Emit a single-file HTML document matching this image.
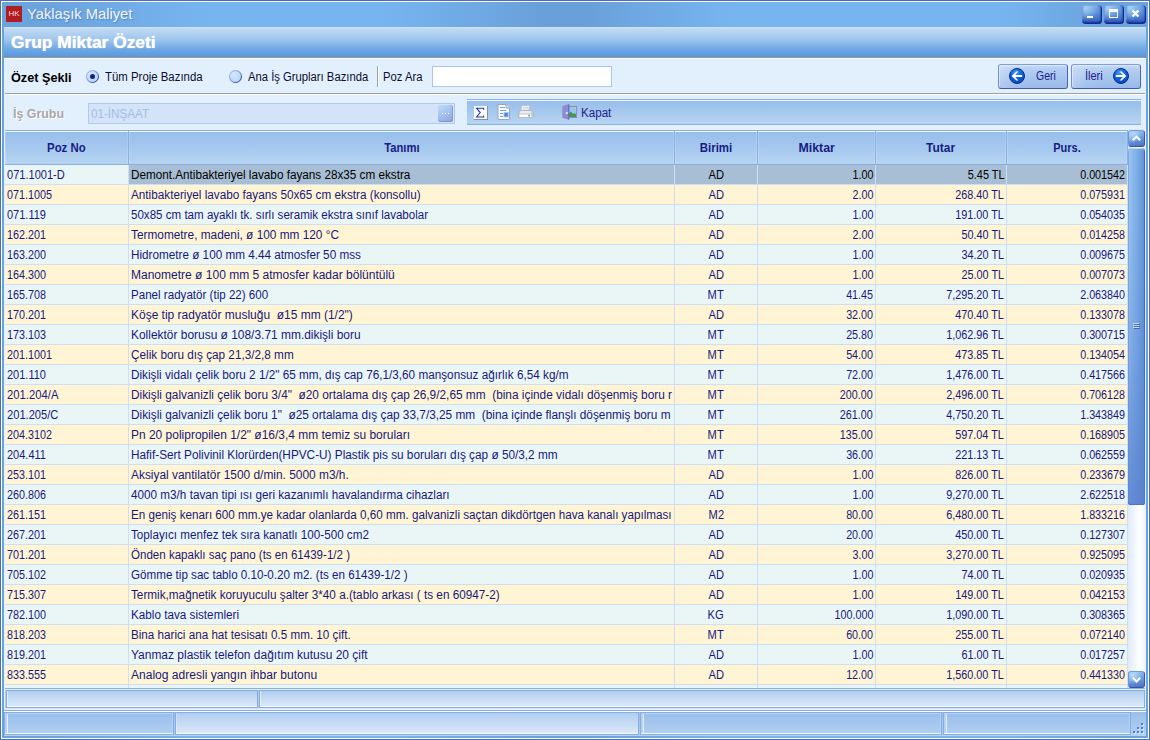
<!DOCTYPE html>
<html><head><meta charset="utf-8"><title>Yaklaşık Maliyet</title>
<style>
*{box-sizing:border-box;margin:0;padding:0}
html,body{width:1150px;height:740px;overflow:hidden;background:#6ba3dd}
body{position:relative;font-family:"Liberation Sans",sans-serif;font-size:12px;color:#18187e}
.abs{position:absolute}
/* window frame */
#frame{position:absolute;left:0;top:0;width:1150px;height:740px;background:#4970b7}
#frameW{position:absolute;left:1px;top:1px;width:1148px;height:738px;background:#fff}
#frameB{position:absolute;left:2px;top:2px;width:1146px;height:736px;
  background:linear-gradient(90deg,#6ba3dd 0%,#6ba3dd 4%,#77b5f1 18%,#77b5f1 33%,#6aa0da 47%,#6aa0da 51%,#77b5f1 64%,#77b5f1 87%,#6ba3dd 96%,#6ba3dd 100%)}
#botBlue{position:absolute;left:4px;top:735px;width:1142px;height:1px;background:#b4d2f2}
#icon{position:absolute;left:6px;top:6px;width:16px;height:16px;background:#b11c22;color:#fff;font-size:8px;line-height:16px;text-align:center;letter-spacing:-.1px;color:#f7dede}
#title{position:absolute;left:27px;top:3px;height:22px;line-height:22px;color:#f3f7fd;text-shadow:1px 1px 1px rgba(60,100,170,.55)}
.wb{position:absolute;top:5px;width:20px;height:19px;border-radius:3.5px;
  background:radial-gradient(circle at 20% 15%,rgba(185,226,248,.75) 0%,rgba(185,226,248,0) 55%),linear-gradient(180deg,#6fa5e3 0%,#5b91db 40%,#406dc7 78%,#2c50b3 100%);
  box-shadow:inset -1px -1px 1px #14288f,inset 0 -2px 2px rgba(20,40,143,.75),inset -2px 0 2px rgba(30,60,170,.5),inset 1px 1px 0 rgba(150,195,240,.6)}
/* client */
#client{position:absolute;left:4px;top:27px;width:1142px;height:684px;background:#e2effd}
#hdr{position:absolute;left:4px;top:27px;width:1142px;height:30px;background:linear-gradient(180deg,#d0e2f6 0,#d0e2f6 1px,#c4dbf3 1px,#9cc5ee 43%,#74aae4 70%,#5698e0 100%)}
#hdrline{position:absolute;left:4px;top:57px;width:1142px;height:2px;background:linear-gradient(180deg,#9b9896 0,#9b9896 1px,#fff 1px)}
#hdrtxt{position:absolute;left:11px;top:31.6px;height:20px;line-height:20px;color:#fff;text-shadow:0 0 1px #fff}
.sepH{position:absolute;left:5px;top:93px;width:1140px;height:2px;background:linear-gradient(180deg,#9f9f9f 0,#9f9f9f 1px,#fff 1px)}
.sepV{position:absolute;left:377px;top:66px;width:2px;height:21px;background:linear-gradient(90deg,#a0a0a0 0,#a0a0a0 1px,#fff 1px)}
.lbl{position:absolute;height:20px;line-height:20px;white-space:pre}
.radio{position:absolute;width:13px;height:13px;border-radius:50%;background:linear-gradient(135deg,#a3c9f2 0%,#7ea4e0 40%,#3a4ea8 75%,#1d2b8c 100%)}
.radio:before{content:"";position:absolute;left:1px;top:1px;width:11px;height:11px;border-radius:50%;background:radial-gradient(circle at 40% 35%,#d9e9fb 0%,#c0daf7 55%,#aecdf2 100%)}
.radio.on:after{content:"";position:absolute;left:4px;top:4px;width:5px;height:5px;border-radius:50%;background:#141e86}
#search{position:absolute;left:432px;top:66px;width:180px;height:21px;background:#fff;border:1px solid #a9c6ee}
.btn{position:absolute;top:64px;width:70px;height:25px;border:1px solid;border-color:#7f9ddb #4f63b4 #4459ad #7191d5;border-radius:3px;
  background:linear-gradient(100deg,rgba(255,255,255,.28) 0%,rgba(255,255,255,.08) 25%,rgba(255,255,255,0) 50%),linear-gradient(180deg,#c6daf5 0%,#b4cef1 20%,#a5c4ed 60%,#98bae9 100%);box-shadow:inset 1px 1px 0 rgba(255,255,255,.4)}
/* combobox */
#combo{position:absolute;left:88px;top:103px;width:367px;height:21px;background:#d4e3f7;border:1px solid #aecbef}
#ell{position:absolute;left:438px;top:105px;width:15px;height:17px;border-radius:3px;background:linear-gradient(150deg,#c0dcf6 0%,#aacaf0 35%,#9db9e8 65%,#8d9fd8 100%);box-shadow:inset 0 -1px 0 #8491cf,inset -1px 0 0 #8c9ad6}
#ell i{position:absolute;top:8px;width:1.2px;height:1.2px;background:#fff}
/* toolbar */
#tb{position:absolute;left:467px;top:99px;width:674px;height:26px;
  background:linear-gradient(180deg,#8aafe4 0,#8aafe4 1px,#ecf4fd 1px,#ecf4fd 2px,#97beea 2px,#b8d4f2 25px,#8aafe4 25px)}
/* grid */
#gridB{position:absolute;left:4px;top:130px;width:1142px;height:559px;background:#e2effd}
#ghead{position:absolute;left:5px;top:130px;width:1123px;height:35px;background:#8aafe4}
.h{position:absolute;top:131px;height:33px;line-height:34px;text-align:center;font-weight:bold;color:#181c82;
  background:linear-gradient(180deg,#f0f7fe 0,#f0f7fe 1px,#97beeb 1px,#a5c8ee 50%,#b6d4f2 100%);box-shadow:inset 1px 0 0 rgba(255,255,255,.16),inset -1px 0 0 rgba(255,255,255,.14)}
.r{position:absolute;left:0;width:1128px;height:20px}
.c{position:absolute;top:0;height:19px;line-height:21px;overflow:hidden;white-space:pre}
#gbody{position:absolute;left:5px;top:165px;width:1123px;height:523px;background:#cddef5}
#gbot{position:absolute;left:5px;top:688px;width:1140px;height:1px;background:#8aafe4}
/* scrollbar */
#sb{position:absolute;left:1128px;top:130px;width:17px;height:558px;background:linear-gradient(90deg,#dfebfa 0%,#f4f8fe 45%,#ffffff 70%,#eef4fd 100%)}
.sbb{position:absolute;left:1128px;width:17px;height:17px;border-radius:3px;border:1px solid;border-color:#7399de #3f55ac #3a4ea6 #6f95dc;
  background:radial-gradient(circle at 25% 20%,rgba(200,232,250,.75) 0%,rgba(200,232,250,0) 55%),linear-gradient(170deg,#94bfee 0%,#78a8e6 35%,#5f8cd8 68%,#4b70c3 100%)}
#thumb{position:absolute;left:1128px;top:148px;width:17px;height:357px;border-radius:3px;
  background:linear-gradient(90deg,#a5cdf3 0%,#8fbeee 20%,#7dade7 55%,#5f90d8 100%);box-shadow:inset 0 -1px 0 #3a4ea6,inset 0 1px 0 #b9d7f5,inset 1px 0 0 #86a9e2,inset -1px 0 0 #4560b4}
#thumbShade{position:absolute;left:1128px;top:148px;width:17px;height:357px;border-radius:3px;background:linear-gradient(180deg,rgba(85,125,205,0) 0%,rgba(85,125,205,.12) 30%,rgba(85,125,205,.3) 55%,rgba(85,125,205,.8) 100%)}
/* footer + status */
.pn{position:absolute;border:1px solid #86ade3}
.pn>div{position:absolute;left:0;top:0;right:0;bottom:0;border-bottom:1px solid #f2f8fe}
.f>div{background:linear-gradient(180deg,#b1cef0 0%,#dbe8f9 100%);box-shadow:inset 1px 0 0 rgba(255,255,255,.55)}
.s1>div{background:linear-gradient(180deg,#9abeeb 0%,#afcef1 100%);box-shadow:inset 2px 1px 0 #b6d1f2,inset -1px 0 0 #b6d1f2,inset 3px 0 0 rgba(255,255,255,.7)}
.s2>div{background:linear-gradient(180deg,#b1cef0 0%,#dbe8f9 100%);box-shadow:inset 1px 0 0 rgba(255,255,255,.3)}
</style></head><body>
<div id="frame"></div><div id="frameW"></div><div id="frameB"></div><div id="botBlue"></div>
<div id="icon">HK</div>
<div id="title"><span style="display:inline-block;white-space:pre;font-size:15px;transform:scaleX(0.9826);transform-origin:left center;">Yaklaşık Maliyet</span></div>
<!-- window buttons -->
<div class="wb" style="left:1082px"><svg width="20" height="20" style="position:absolute;left:0;top:0"><rect x="5" y="11" width="6" height="2" fill="#fff"/></svg></div>
<div class="wb" style="left:1104px"><svg width="20" height="20" style="position:absolute;left:0;top:0"><rect x="5.5" y="5.5" width="8" height="7" fill="none" stroke="#fff" stroke-width="1"/><rect x="5" y="4" width="9" height="3" fill="#fff"/></svg></div>
<div class="wb" style="left:1126px"><svg width="20" height="20" style="position:absolute;left:0;top:0"><path d="M6.5 5.5 L12.5 11.5 M12.5 5.5 L6.5 11.5" stroke="#fff" stroke-width="2.3" fill="none"/></svg></div>

<div id="client"></div>
<div id="hdr"></div><div id="hdrline"></div>
<div id="hdrtxt"><span style="display:inline-block;white-space:pre;font-size:16.5px;font-weight:bold;transform:scaleX(1.0514);transform-origin:left center;">Grup Miktar Özeti</span></div>

<!-- form row 1 -->
<div class="lbl" style="left:11px;top:68px;color:#000"><span style="display:inline-block;white-space:pre;font-size:13px;font-weight:bold;transform:scaleX(0.9752);transform-origin:left center;">Özet Şekli</span></div>
<div class="radio on" style="left:86px;top:70px"></div>
<div class="lbl" style="left:105px;top:67px;color:#0e0e2c"><span style="display:inline-block;white-space:pre;font-size:12px;transform:scaleX(0.9502);transform-origin:left center;">Tüm Proje Bazında</span></div>
<div class="radio" style="left:229px;top:70px"></div>
<div class="lbl" style="left:248px;top:67px;color:#0e0e2c"><span style="display:inline-block;white-space:pre;font-size:12px;transform:scaleX(0.9385);transform-origin:left center;">Ana İş Grupları Bazında</span></div>
<div class="sepV"></div>
<div class="lbl" style="left:383px;top:67px;color:#0e0e2c"><span style="display:inline-block;white-space:pre;font-size:12px;transform:scaleX(0.9374);transform-origin:left center;">Poz Ara</span></div>
<div id="search"></div>
<div class="btn" style="left:998px">
  <svg width="16" height="16" viewBox="0 0 16 16" style="position:absolute;left:10px;top:3px"><defs><radialGradient id="bg1" cx="42%" cy="28%" r="75%"><stop offset="0" stop-color="#4c9cf4"/><stop offset=".45" stop-color="#0f66dc"/><stop offset="1" stop-color="#0a45b8"/></radialGradient></defs><circle cx="8" cy="8" r="7.5" fill="url(#bg1)" stroke="#0c2b8c" stroke-width="1"/><path d="M2.6 8 L7.4 3.4 L9.4 3.4 L6.2 7 H13.2 V9 H6.2 L9.4 12.6 L7.4 12.6 Z" fill="#fff"/></svg>
  <div class="lbl" style="left:37px;top:1px;color:#1d2087"><span style="display:inline-block;white-space:pre;font-size:12px;transform:scaleX(0.8733);transform-origin:left center;">Geri</span></div>
</div>
<div class="btn" style="left:1071px">
  <div class="lbl" style="left:13px;top:1px;color:#1d2087"><span style="display:inline-block;white-space:pre;font-size:12px;transform:scaleX(0.9150);transform-origin:left center;">İleri</span></div>
  <svg width="16" height="16" viewBox="0 0 16 16" style="position:absolute;left:41px;top:3px"><circle cx="8" cy="8" r="7.5" fill="url(#bg1)" stroke="#0c2b8c" stroke-width="1"/><path d="M13.4 8 L8.6 3.4 L6.6 3.4 L9.8 7 H2.8 V9 H9.8 L6.6 12.6 L8.6 12.6 Z" fill="#fff"/></svg>
</div>
<div class="sepH"></div>

<!-- form row 2 -->
<div class="lbl" style="left:13px;top:104px;color:#a8a8a8;text-shadow:1px 1px 0 #fff"><span style="display:inline-block;white-space:pre;font-size:13px;font-weight:bold;transform:scaleX(0.9541);transform-origin:left center;">İş Grubu</span></div>
<div id="combo"><div class="lbl" style="left:2px;top:0;height:19px;line-height:21px;color:#a3bde6"><span style="display:inline-block;white-space:pre;font-size:12px;transform:scaleX(0.9700);transform-origin:left center;">01-İNŞAAT</span></div></div>
<div id="ell"><i style="left:4px"></i><i style="left:7px"></i><i style="left:10px"></i></div>
<div id="tb"></div>
<!-- sigma icon -->
<svg class="abs" style="left:473px;top:105px" width="16" height="16" viewBox="0 0 16 16"><rect x="1" y="1" width="14" height="14" fill="#8a8fa0"/><rect x="1" y="1" width="13" height="13" fill="#fbfcff"/><path d="M10.6 4.8 V3.2 H3.6 L7.2 7.6 L3.6 12 H10.6 V10.4" stroke="#2038a8" stroke-width="1.1" fill="none"/></svg>
<!-- doc icon -->
<svg class="abs" style="left:497px;top:104px" width="14" height="17" viewBox="0 0 14 17"><path d="M1 .5 H9 L12.5 4 V15.5 H1 Z" fill="#fbfdff" stroke="#9aa6bf" stroke-width="1"/><path d="M9 .5 V4 H12.5" fill="#dfe6f2" stroke="#9aa6bf"/><path d="M3 3.5 H8 M3 6.5 H9.5 M3 9.5 H6 M3 12.5 H6" stroke="#5b9be0" stroke-width=".9"/><rect x="7" y="8.5" width="4.2" height="4.5" fill="#4c86d8" stroke="#a9c8ee" stroke-width=".9"/></svg>
<!-- printer icon -->
<svg class="abs" style="left:518px;top:104px" width="16" height="16" viewBox="0 0 16 16"><path d="M4 1.5 H12 L10.5 7 H2.5 Z" fill="#f7f8fb" stroke="#b7bccb" stroke-width=".8"/><path d="M5 3.3 H10.8 M4.6 5 H10.2" stroke="#c7cad6" stroke-width=".8"/><path d="M1 8 L3 6.5 H13 L15 8 V13.5 H1 Z" fill="#e9ebf1" stroke="#a4a9ba" stroke-width=".8"/><rect x="1" y="10" width="14" height="3.5" fill="#fdfdfe" stroke="#a4a9ba" stroke-width=".6"/><rect x="10.5" y="10.6" width="1.2" height="2" fill="#2e9a44"/><path d="M13 7 L15 8 V13.5 L13.6 14.4 Z" fill="#c3c7d3"/></svg>
<!-- kapat icon -->
<svg class="abs" style="left:562px;top:104px" width="16" height="16" viewBox="0 0 16 16"><rect x="6.5" y="2.5" width="8" height="11" fill="#8fc7f2" stroke="#8d88cf" stroke-width="1"/><path d="M11.5 3 H14 V5.5 Z" fill="#f3c638"/><path d="M7 13 V9.5 L9 7.5 L11 10 L12.5 9 L14 10.5 V13 Z" fill="#3f9a45"/><path d="M.8 2.6 L6.8 .6 V15.4 L.8 13.4 Z" fill="#8e8cd3" stroke="#7a77c4" stroke-width=".6"/><path d="M6.8 .6 V15.4" stroke="#6562b4" stroke-width=".9"/><path d="M3.8 9 h2 M4.8 8 v2" stroke="#fff" stroke-width=".9"/></svg>
<div class="lbl" style="left:581px;top:103px;color:#1d2087"><span style="display:inline-block;white-space:pre;font-size:12px;transform:scaleX(0.9662);transform-origin:left center;">Kapat</span></div>

<!-- grid -->
<div id="ghead"></div>
<div class='h' style='left:5px;width:123px'><span style="display:inline-block;white-space:pre;font-size:12px;font-weight:bold;transform:scaleX(0.9466);transform-origin:center center;">Poz No</span></div>
<div class='h' style='left:129px;width:545px'><span style="display:inline-block;white-space:pre;font-size:12px;font-weight:bold;transform:scaleX(0.9370);transform-origin:center center;">Tanımı</span></div>
<div class='h' style='left:675px;width:82px'><span style="display:inline-block;white-space:pre;font-size:12px;font-weight:bold;transform:scaleX(0.9525);transform-origin:center center;">Birimi</span></div>
<div class='h' style='left:758px;width:117px'><span style="display:inline-block;white-space:pre;font-size:12px;font-weight:bold;transform:scaleX(1.0327);transform-origin:center center;">Miktar</span></div>
<div class='h' style='left:876px;width:130px'><span style="display:inline-block;white-space:pre;font-size:12px;font-weight:bold;transform:scaleX(0.9962);transform-origin:center center;">Tutar</span></div>
<div class='h' style='left:1007px;width:120px'><span style="display:inline-block;white-space:pre;font-size:12px;font-weight:bold;transform:scaleX(0.9162);transform-origin:center center;">Purs.</span></div>
<div id="gbody"></div>
<div class='r' style='top:165px'><div class='c' style='left:5px;width:123px;background:#eaf6f6;color:#18187e'><div style='position:absolute;left:2px;top:0'><span style="display:inline-block;white-space:pre;font-size:12px;transform:scaleX(0.9200);transform-origin:left center;">071.1001-D</span></div></div><div class='c' style='left:129px;width:545px;background:#a7bed4;color:#000'><div style='position:absolute;left:2px;top:0'><span style="display:inline-block;white-space:pre;font-size:12px;transform:scaleX(0.9764);transform-origin:left center;">Demont.Antibakteriyel lavabo fayans 28x35 cm ekstra</span></div></div><div class='c' style='left:675px;width:82px;background:#a7bed4;color:#000'><div style='position:absolute;left:0;right:0;top:0;text-align:center'><span style="display:inline-block;white-space:pre;font-size:12px;transform:scaleX(0.9300);transform-origin:center center;">AD</span></div></div><div class='c' style='left:758px;width:117px;background:#a7bed4;color:#000'><div style='position:absolute;right:2px;top:0;text-align:right'><span style="display:inline-block;white-space:pre;font-size:12px;transform:scaleX(0.8947);transform-origin:right center;">1.00</span></div></div><div class='c' style='left:876px;width:130px;background:#a7bed4;color:#000'><div style='position:absolute;right:2px;top:0;text-align:right'><span style="display:inline-block;white-space:pre;font-size:12px;transform:scaleX(0.9065);transform-origin:right center;">5.45 TL</span></div></div><div class='c' style='left:1007px;width:120px;background:#a7bed4;color:#000'><div style='position:absolute;right:2px;top:0;text-align:right'><span style="display:inline-block;white-space:pre;font-size:12px;transform:scaleX(0.8969);transform-origin:right center;">0.001542</span></div></div></div>
<div class='r' style='top:185px'><div class='c' style='left:5px;width:123px;background:#fff5d4;color:#18187e'><div style='position:absolute;left:2px;top:0'><span style="display:inline-block;white-space:pre;font-size:12px;transform:scaleX(0.8969);transform-origin:left center;">071.1005</span></div></div><div class='c' style='left:129px;width:545px;background:#fff5d4;color:#18187e'><div style='position:absolute;left:2px;top:0'><span style="display:inline-block;white-space:pre;font-size:12px;transform:scaleX(0.9779);transform-origin:left center;">Antibakteriyel lavabo fayans 50x65 cm ekstra (konsollu)</span></div></div><div class='c' style='left:675px;width:82px;background:#fff5d4;color:#18187e'><div style='position:absolute;left:0;right:0;top:0;text-align:center'><span style="display:inline-block;white-space:pre;font-size:12px;transform:scaleX(0.9300);transform-origin:center center;">AD</span></div></div><div class='c' style='left:758px;width:117px;background:#fff5d4;color:#18187e'><div style='position:absolute;right:2px;top:0;text-align:right'><span style="display:inline-block;white-space:pre;font-size:12px;transform:scaleX(0.8947);transform-origin:right center;">2.00</span></div></div><div class='c' style='left:876px;width:130px;background:#fff5d4;color:#18187e'><div style='position:absolute;right:2px;top:0;text-align:right'><span style="display:inline-block;white-space:pre;font-size:12px;transform:scaleX(0.9047);transform-origin:right center;">268.40 TL</span></div></div><div class='c' style='left:1007px;width:120px;background:#fff5d4;color:#18187e'><div style='position:absolute;right:2px;top:0;text-align:right'><span style="display:inline-block;white-space:pre;font-size:12px;transform:scaleX(0.8969);transform-origin:right center;">0.075931</span></div></div></div>
<div class='r' style='top:205px'><div class='c' style='left:5px;width:123px;background:#eaf6f6;color:#18187e'><div style='position:absolute;left:2px;top:0'><span style="display:inline-block;white-space:pre;font-size:12px;transform:scaleX(0.9153);transform-origin:left center;">071.119</span></div></div><div class='c' style='left:129px;width:545px;background:#eaf6f6;color:#18187e'><div style='position:absolute;left:2px;top:0'><span style="display:inline-block;white-space:pre;font-size:12px;transform:scaleX(0.9643);transform-origin:left center;">50x85 cm tam ayaklı tk. sırlı seramik ekstra sınıf lavabolar</span></div></div><div class='c' style='left:675px;width:82px;background:#eaf6f6;color:#18187e'><div style='position:absolute;left:0;right:0;top:0;text-align:center'><span style="display:inline-block;white-space:pre;font-size:12px;transform:scaleX(0.9300);transform-origin:center center;">AD</span></div></div><div class='c' style='left:758px;width:117px;background:#eaf6f6;color:#18187e'><div style='position:absolute;right:2px;top:0;text-align:right'><span style="display:inline-block;white-space:pre;font-size:12px;transform:scaleX(0.8947);transform-origin:right center;">1.00</span></div></div><div class='c' style='left:876px;width:130px;background:#eaf6f6;color:#18187e'><div style='position:absolute;right:2px;top:0;text-align:right'><span style="display:inline-block;white-space:pre;font-size:12px;transform:scaleX(0.9047);transform-origin:right center;">191.00 TL</span></div></div><div class='c' style='left:1007px;width:120px;background:#eaf6f6;color:#18187e'><div style='position:absolute;right:2px;top:0;text-align:right'><span style="display:inline-block;white-space:pre;font-size:12px;transform:scaleX(0.8969);transform-origin:right center;">0.054035</span></div></div></div>
<div class='r' style='top:225px'><div class='c' style='left:5px;width:123px;background:#fff5d4;color:#18187e'><div style='position:absolute;left:2px;top:0'><span style="display:inline-block;white-space:pre;font-size:12px;transform:scaleX(0.8965);transform-origin:left center;">162.201</span></div></div><div class='c' style='left:129px;width:545px;background:#fff5d4;color:#18187e'><div style='position:absolute;left:2px;top:0'><span style="display:inline-block;white-space:pre;font-size:12px;transform:scaleX(0.9864);transform-origin:left center;">Termometre, madeni, ø 100 mm 120 °C</span></div></div><div class='c' style='left:675px;width:82px;background:#fff5d4;color:#18187e'><div style='position:absolute;left:0;right:0;top:0;text-align:center'><span style="display:inline-block;white-space:pre;font-size:12px;transform:scaleX(0.9300);transform-origin:center center;">AD</span></div></div><div class='c' style='left:758px;width:117px;background:#fff5d4;color:#18187e'><div style='position:absolute;right:2px;top:0;text-align:right'><span style="display:inline-block;white-space:pre;font-size:12px;transform:scaleX(0.8947);transform-origin:right center;">2.00</span></div></div><div class='c' style='left:876px;width:130px;background:#fff5d4;color:#18187e'><div style='position:absolute;right:2px;top:0;text-align:right'><span style="display:inline-block;white-space:pre;font-size:12px;transform:scaleX(0.9055);transform-origin:right center;">50.40 TL</span></div></div><div class='c' style='left:1007px;width:120px;background:#fff5d4;color:#18187e'><div style='position:absolute;right:2px;top:0;text-align:right'><span style="display:inline-block;white-space:pre;font-size:12px;transform:scaleX(0.8969);transform-origin:right center;">0.014258</span></div></div></div>
<div class='r' style='top:245px'><div class='c' style='left:5px;width:123px;background:#eaf6f6;color:#18187e'><div style='position:absolute;left:2px;top:0'><span style="display:inline-block;white-space:pre;font-size:12px;transform:scaleX(0.8965);transform-origin:left center;">163.200</span></div></div><div class='c' style='left:129px;width:545px;background:#eaf6f6;color:#18187e'><div style='position:absolute;left:2px;top:0'><span style="display:inline-block;white-space:pre;font-size:12px;transform:scaleX(0.9765);transform-origin:left center;">Hidrometre ø 100 mm 4.44 atmosfer 50 mss</span></div></div><div class='c' style='left:675px;width:82px;background:#eaf6f6;color:#18187e'><div style='position:absolute;left:0;right:0;top:0;text-align:center'><span style="display:inline-block;white-space:pre;font-size:12px;transform:scaleX(0.9300);transform-origin:center center;">AD</span></div></div><div class='c' style='left:758px;width:117px;background:#eaf6f6;color:#18187e'><div style='position:absolute;right:2px;top:0;text-align:right'><span style="display:inline-block;white-space:pre;font-size:12px;transform:scaleX(0.8947);transform-origin:right center;">1.00</span></div></div><div class='c' style='left:876px;width:130px;background:#eaf6f6;color:#18187e'><div style='position:absolute;right:2px;top:0;text-align:right'><span style="display:inline-block;white-space:pre;font-size:12px;transform:scaleX(0.9055);transform-origin:right center;">34.20 TL</span></div></div><div class='c' style='left:1007px;width:120px;background:#eaf6f6;color:#18187e'><div style='position:absolute;right:2px;top:0;text-align:right'><span style="display:inline-block;white-space:pre;font-size:12px;transform:scaleX(0.8969);transform-origin:right center;">0.009675</span></div></div></div>
<div class='r' style='top:265px'><div class='c' style='left:5px;width:123px;background:#fff5d4;color:#18187e'><div style='position:absolute;left:2px;top:0'><span style="display:inline-block;white-space:pre;font-size:12px;transform:scaleX(0.8965);transform-origin:left center;">164.300</span></div></div><div class='c' style='left:129px;width:545px;background:#fff5d4;color:#18187e'><div style='position:absolute;left:2px;top:0'><span style="display:inline-block;white-space:pre;font-size:12px;transform:scaleX(1.0013);transform-origin:left center;">Manometre ø 100 mm 5 atmosfer kadar bölüntülü</span></div></div><div class='c' style='left:675px;width:82px;background:#fff5d4;color:#18187e'><div style='position:absolute;left:0;right:0;top:0;text-align:center'><span style="display:inline-block;white-space:pre;font-size:12px;transform:scaleX(0.9300);transform-origin:center center;">AD</span></div></div><div class='c' style='left:758px;width:117px;background:#fff5d4;color:#18187e'><div style='position:absolute;right:2px;top:0;text-align:right'><span style="display:inline-block;white-space:pre;font-size:12px;transform:scaleX(0.8947);transform-origin:right center;">1.00</span></div></div><div class='c' style='left:876px;width:130px;background:#fff5d4;color:#18187e'><div style='position:absolute;right:2px;top:0;text-align:right'><span style="display:inline-block;white-space:pre;font-size:12px;transform:scaleX(0.9055);transform-origin:right center;">25.00 TL</span></div></div><div class='c' style='left:1007px;width:120px;background:#fff5d4;color:#18187e'><div style='position:absolute;right:2px;top:0;text-align:right'><span style="display:inline-block;white-space:pre;font-size:12px;transform:scaleX(0.8969);transform-origin:right center;">0.007073</span></div></div></div>
<div class='r' style='top:285px'><div class='c' style='left:5px;width:123px;background:#eaf6f6;color:#18187e'><div style='position:absolute;left:2px;top:0'><span style="display:inline-block;white-space:pre;font-size:12px;transform:scaleX(0.8965);transform-origin:left center;">165.708</span></div></div><div class='c' style='left:129px;width:545px;background:#eaf6f6;color:#18187e'><div style='position:absolute;left:2px;top:0'><span style="display:inline-block;white-space:pre;font-size:12px;transform:scaleX(0.9656);transform-origin:left center;">Panel radyatör (tip 22) 600</span></div></div><div class='c' style='left:675px;width:82px;background:#eaf6f6;color:#18187e'><div style='position:absolute;left:0;right:0;top:0;text-align:center'><span style="display:inline-block;white-space:pre;font-size:12px;transform:scaleX(0.9300);transform-origin:center center;">MT</span></div></div><div class='c' style='left:758px;width:117px;background:#eaf6f6;color:#18187e'><div style='position:absolute;right:2px;top:0;text-align:right'><span style="display:inline-block;white-space:pre;font-size:12px;transform:scaleX(0.8957);transform-origin:right center;">41.45</span></div></div><div class='c' style='left:876px;width:130px;background:#eaf6f6;color:#18187e'><div style='position:absolute;right:2px;top:0;text-align:right'><span style="display:inline-block;white-space:pre;font-size:12px;transform:scaleX(0.9022);transform-origin:right center;">7,295.20 TL</span></div></div><div class='c' style='left:1007px;width:120px;background:#eaf6f6;color:#18187e'><div style='position:absolute;right:2px;top:0;text-align:right'><span style="display:inline-block;white-space:pre;font-size:12px;transform:scaleX(0.8969);transform-origin:right center;">2.063840</span></div></div></div>
<div class='r' style='top:305px'><div class='c' style='left:5px;width:123px;background:#fff5d4;color:#18187e'><div style='position:absolute;left:2px;top:0'><span style="display:inline-block;white-space:pre;font-size:12px;transform:scaleX(0.8965);transform-origin:left center;">170.201</span></div></div><div class='c' style='left:129px;width:545px;background:#fff5d4;color:#18187e'><div style='position:absolute;left:2px;top:0'><span style="display:inline-block;white-space:pre;font-size:12px;transform:scaleX(0.9975);transform-origin:left center;">Köşe tip radyatör musluğu  ø15 mm (1/2&quot;)</span></div></div><div class='c' style='left:675px;width:82px;background:#fff5d4;color:#18187e'><div style='position:absolute;left:0;right:0;top:0;text-align:center'><span style="display:inline-block;white-space:pre;font-size:12px;transform:scaleX(0.9300);transform-origin:center center;">AD</span></div></div><div class='c' style='left:758px;width:117px;background:#fff5d4;color:#18187e'><div style='position:absolute;right:2px;top:0;text-align:right'><span style="display:inline-block;white-space:pre;font-size:12px;transform:scaleX(0.8957);transform-origin:right center;">32.00</span></div></div><div class='c' style='left:876px;width:130px;background:#fff5d4;color:#18187e'><div style='position:absolute;right:2px;top:0;text-align:right'><span style="display:inline-block;white-space:pre;font-size:12px;transform:scaleX(0.9047);transform-origin:right center;">470.40 TL</span></div></div><div class='c' style='left:1007px;width:120px;background:#fff5d4;color:#18187e'><div style='position:absolute;right:2px;top:0;text-align:right'><span style="display:inline-block;white-space:pre;font-size:12px;transform:scaleX(0.8969);transform-origin:right center;">0.133078</span></div></div></div>
<div class='r' style='top:325px'><div class='c' style='left:5px;width:123px;background:#eaf6f6;color:#18187e'><div style='position:absolute;left:2px;top:0'><span style="display:inline-block;white-space:pre;font-size:12px;transform:scaleX(0.8965);transform-origin:left center;">173.103</span></div></div><div class='c' style='left:129px;width:545px;background:#eaf6f6;color:#18187e'><div style='position:absolute;left:2px;top:0'><span style="display:inline-block;white-space:pre;font-size:12px;transform:scaleX(0.9949);transform-origin:left center;">Kollektör borusu ø 108/3.71 mm.dikişli boru</span></div></div><div class='c' style='left:675px;width:82px;background:#eaf6f6;color:#18187e'><div style='position:absolute;left:0;right:0;top:0;text-align:center'><span style="display:inline-block;white-space:pre;font-size:12px;transform:scaleX(0.9300);transform-origin:center center;">MT</span></div></div><div class='c' style='left:758px;width:117px;background:#eaf6f6;color:#18187e'><div style='position:absolute;right:2px;top:0;text-align:right'><span style="display:inline-block;white-space:pre;font-size:12px;transform:scaleX(0.8957);transform-origin:right center;">25.80</span></div></div><div class='c' style='left:876px;width:130px;background:#eaf6f6;color:#18187e'><div style='position:absolute;right:2px;top:0;text-align:right'><span style="display:inline-block;white-space:pre;font-size:12px;transform:scaleX(0.9022);transform-origin:right center;">1,062.96 TL</span></div></div><div class='c' style='left:1007px;width:120px;background:#eaf6f6;color:#18187e'><div style='position:absolute;right:2px;top:0;text-align:right'><span style="display:inline-block;white-space:pre;font-size:12px;transform:scaleX(0.8969);transform-origin:right center;">0.300715</span></div></div></div>
<div class='r' style='top:345px'><div class='c' style='left:5px;width:123px;background:#fff5d4;color:#18187e'><div style='position:absolute;left:2px;top:0'><span style="display:inline-block;white-space:pre;font-size:12px;transform:scaleX(0.8969);transform-origin:left center;">201.1001</span></div></div><div class='c' style='left:129px;width:545px;background:#fff5d4;color:#18187e'><div style='position:absolute;left:2px;top:0'><span style="display:inline-block;white-space:pre;font-size:12px;transform:scaleX(0.9797);transform-origin:left center;">Çelik boru dış çap 21,3/2,8 mm</span></div></div><div class='c' style='left:675px;width:82px;background:#fff5d4;color:#18187e'><div style='position:absolute;left:0;right:0;top:0;text-align:center'><span style="display:inline-block;white-space:pre;font-size:12px;transform:scaleX(0.9300);transform-origin:center center;">MT</span></div></div><div class='c' style='left:758px;width:117px;background:#fff5d4;color:#18187e'><div style='position:absolute;right:2px;top:0;text-align:right'><span style="display:inline-block;white-space:pre;font-size:12px;transform:scaleX(0.8957);transform-origin:right center;">54.00</span></div></div><div class='c' style='left:876px;width:130px;background:#fff5d4;color:#18187e'><div style='position:absolute;right:2px;top:0;text-align:right'><span style="display:inline-block;white-space:pre;font-size:12px;transform:scaleX(0.9047);transform-origin:right center;">473.85 TL</span></div></div><div class='c' style='left:1007px;width:120px;background:#fff5d4;color:#18187e'><div style='position:absolute;right:2px;top:0;text-align:right'><span style="display:inline-block;white-space:pre;font-size:12px;transform:scaleX(0.8969);transform-origin:right center;">0.134054</span></div></div></div>
<div class='r' style='top:365px'><div class='c' style='left:5px;width:123px;background:#eaf6f6;color:#18187e'><div style='position:absolute;left:2px;top:0'><span style="display:inline-block;white-space:pre;font-size:12px;transform:scaleX(0.9153);transform-origin:left center;">201.110</span></div></div><div class='c' style='left:129px;width:545px;background:#eaf6f6;color:#18187e'><div style='position:absolute;left:2px;top:0'><span style="display:inline-block;white-space:pre;font-size:12px;transform:scaleX(0.9784);transform-origin:left center;">Dikişli vidalı çelik boru 2 1/2&quot; 65 mm, dış cap 76,1/3,60 manşonsuz ağırlık 6,54 kg/m</span></div></div><div class='c' style='left:675px;width:82px;background:#eaf6f6;color:#18187e'><div style='position:absolute;left:0;right:0;top:0;text-align:center'><span style="display:inline-block;white-space:pre;font-size:12px;transform:scaleX(0.9300);transform-origin:center center;">MT</span></div></div><div class='c' style='left:758px;width:117px;background:#eaf6f6;color:#18187e'><div style='position:absolute;right:2px;top:0;text-align:right'><span style="display:inline-block;white-space:pre;font-size:12px;transform:scaleX(0.8957);transform-origin:right center;">72.00</span></div></div><div class='c' style='left:876px;width:130px;background:#eaf6f6;color:#18187e'><div style='position:absolute;right:2px;top:0;text-align:right'><span style="display:inline-block;white-space:pre;font-size:12px;transform:scaleX(0.9022);transform-origin:right center;">1,476.00 TL</span></div></div><div class='c' style='left:1007px;width:120px;background:#eaf6f6;color:#18187e'><div style='position:absolute;right:2px;top:0;text-align:right'><span style="display:inline-block;white-space:pre;font-size:12px;transform:scaleX(0.8969);transform-origin:right center;">0.417566</span></div></div></div>
<div class='r' style='top:385px'><div class='c' style='left:5px;width:123px;background:#fff5d4;color:#18187e'><div style='position:absolute;left:2px;top:0'><span style="display:inline-block;white-space:pre;font-size:12px;transform:scaleX(0.9393);transform-origin:left center;">201.204/A</span></div></div><div class='c' style='left:129px;width:545px;background:#fff5d4;color:#18187e'><div style='position:absolute;left:2px;top:0'><span style="display:inline-block;white-space:pre;font-size:12px;transform:scaleX(0.9875);transform-origin:left center;">Dikişli galvanizli çelik boru 3/4&quot;  ø20 ortalama dış çap 26,9/2,65 mm  (bina içinde vidalı döşenmiş boru r</span></div></div><div class='c' style='left:675px;width:82px;background:#fff5d4;color:#18187e'><div style='position:absolute;left:0;right:0;top:0;text-align:center'><span style="display:inline-block;white-space:pre;font-size:12px;transform:scaleX(0.9300);transform-origin:center center;">MT</span></div></div><div class='c' style='left:758px;width:117px;background:#fff5d4;color:#18187e'><div style='position:absolute;right:2px;top:0;text-align:right'><span style="display:inline-block;white-space:pre;font-size:12px;transform:scaleX(0.8964);transform-origin:right center;">200.00</span></div></div><div class='c' style='left:876px;width:130px;background:#fff5d4;color:#18187e'><div style='position:absolute;right:2px;top:0;text-align:right'><span style="display:inline-block;white-space:pre;font-size:12px;transform:scaleX(0.9022);transform-origin:right center;">2,496.00 TL</span></div></div><div class='c' style='left:1007px;width:120px;background:#fff5d4;color:#18187e'><div style='position:absolute;right:2px;top:0;text-align:right'><span style="display:inline-block;white-space:pre;font-size:12px;transform:scaleX(0.8969);transform-origin:right center;">0.706128</span></div></div></div>
<div class='r' style='top:405px'><div class='c' style='left:5px;width:123px;background:#eaf6f6;color:#18187e'><div style='position:absolute;left:2px;top:0'><span style="display:inline-block;white-space:pre;font-size:12px;transform:scaleX(0.9280);transform-origin:left center;">201.205/C</span></div></div><div class='c' style='left:129px;width:545px;background:#eaf6f6;color:#18187e'><div style='position:absolute;left:2px;top:0'><span style="display:inline-block;white-space:pre;font-size:12px;transform:scaleX(0.9860);transform-origin:left center;">Dikişli galvanizli çelik boru 1&quot;  ø25 ortalama dış çap 33,7/3,25 mm  (bina içinde flanşlı döşenmiş boru m</span></div></div><div class='c' style='left:675px;width:82px;background:#eaf6f6;color:#18187e'><div style='position:absolute;left:0;right:0;top:0;text-align:center'><span style="display:inline-block;white-space:pre;font-size:12px;transform:scaleX(0.9300);transform-origin:center center;">MT</span></div></div><div class='c' style='left:758px;width:117px;background:#eaf6f6;color:#18187e'><div style='position:absolute;right:2px;top:0;text-align:right'><span style="display:inline-block;white-space:pre;font-size:12px;transform:scaleX(0.8964);transform-origin:right center;">261.00</span></div></div><div class='c' style='left:876px;width:130px;background:#eaf6f6;color:#18187e'><div style='position:absolute;right:2px;top:0;text-align:right'><span style="display:inline-block;white-space:pre;font-size:12px;transform:scaleX(0.9022);transform-origin:right center;">4,750.20 TL</span></div></div><div class='c' style='left:1007px;width:120px;background:#eaf6f6;color:#18187e'><div style='position:absolute;right:2px;top:0;text-align:right'><span style="display:inline-block;white-space:pre;font-size:12px;transform:scaleX(0.8969);transform-origin:right center;">1.343849</span></div></div></div>
<div class='r' style='top:425px'><div class='c' style='left:5px;width:123px;background:#fff5d4;color:#18187e'><div style='position:absolute;left:2px;top:0'><span style="display:inline-block;white-space:pre;font-size:12px;transform:scaleX(0.8969);transform-origin:left center;">204.3102</span></div></div><div class='c' style='left:129px;width:545px;background:#fff5d4;color:#18187e'><div style='position:absolute;left:2px;top:0'><span style="display:inline-block;white-space:pre;font-size:12px;transform:scaleX(0.9974);transform-origin:left center;">Pn 20 polipropilen 1/2&quot; ø16/3,4 mm temiz su boruları</span></div></div><div class='c' style='left:675px;width:82px;background:#fff5d4;color:#18187e'><div style='position:absolute;left:0;right:0;top:0;text-align:center'><span style="display:inline-block;white-space:pre;font-size:12px;transform:scaleX(0.9300);transform-origin:center center;">MT</span></div></div><div class='c' style='left:758px;width:117px;background:#fff5d4;color:#18187e'><div style='position:absolute;right:2px;top:0;text-align:right'><span style="display:inline-block;white-space:pre;font-size:12px;transform:scaleX(0.8964);transform-origin:right center;">135.00</span></div></div><div class='c' style='left:876px;width:130px;background:#fff5d4;color:#18187e'><div style='position:absolute;right:2px;top:0;text-align:right'><span style="display:inline-block;white-space:pre;font-size:12px;transform:scaleX(0.9047);transform-origin:right center;">597.04 TL</span></div></div><div class='c' style='left:1007px;width:120px;background:#fff5d4;color:#18187e'><div style='position:absolute;right:2px;top:0;text-align:right'><span style="display:inline-block;white-space:pre;font-size:12px;transform:scaleX(0.8969);transform-origin:right center;">0.168905</span></div></div></div>
<div class='r' style='top:445px'><div class='c' style='left:5px;width:123px;background:#eaf6f6;color:#18187e'><div style='position:absolute;left:2px;top:0'><span style="display:inline-block;white-space:pre;font-size:12px;transform:scaleX(0.9153);transform-origin:left center;">204.411</span></div></div><div class='c' style='left:129px;width:545px;background:#eaf6f6;color:#18187e'><div style='position:absolute;left:2px;top:0'><span style="display:inline-block;white-space:pre;font-size:12px;transform:scaleX(0.9826);transform-origin:left center;">Hafif-Sert Polivinil Klorürden(HPVC-U) Plastik pis su boruları dış çap ø 50/3,2 mm</span></div></div><div class='c' style='left:675px;width:82px;background:#eaf6f6;color:#18187e'><div style='position:absolute;left:0;right:0;top:0;text-align:center'><span style="display:inline-block;white-space:pre;font-size:12px;transform:scaleX(0.9300);transform-origin:center center;">MT</span></div></div><div class='c' style='left:758px;width:117px;background:#eaf6f6;color:#18187e'><div style='position:absolute;right:2px;top:0;text-align:right'><span style="display:inline-block;white-space:pre;font-size:12px;transform:scaleX(0.8957);transform-origin:right center;">36.00</span></div></div><div class='c' style='left:876px;width:130px;background:#eaf6f6;color:#18187e'><div style='position:absolute;right:2px;top:0;text-align:right'><span style="display:inline-block;white-space:pre;font-size:12px;transform:scaleX(0.9047);transform-origin:right center;">221.13 TL</span></div></div><div class='c' style='left:1007px;width:120px;background:#eaf6f6;color:#18187e'><div style='position:absolute;right:2px;top:0;text-align:right'><span style="display:inline-block;white-space:pre;font-size:12px;transform:scaleX(0.8969);transform-origin:right center;">0.062559</span></div></div></div>
<div class='r' style='top:465px'><div class='c' style='left:5px;width:123px;background:#fff5d4;color:#18187e'><div style='position:absolute;left:2px;top:0'><span style="display:inline-block;white-space:pre;font-size:12px;transform:scaleX(0.8965);transform-origin:left center;">253.101</span></div></div><div class='c' style='left:129px;width:545px;background:#fff5d4;color:#18187e'><div style='position:absolute;left:2px;top:0'><span style="display:inline-block;white-space:pre;font-size:12px;transform:scaleX(0.9925);transform-origin:left center;">Aksiyal vantilatör 1500 d/min. 5000 m3/h.</span></div></div><div class='c' style='left:675px;width:82px;background:#fff5d4;color:#18187e'><div style='position:absolute;left:0;right:0;top:0;text-align:center'><span style="display:inline-block;white-space:pre;font-size:12px;transform:scaleX(0.9300);transform-origin:center center;">AD</span></div></div><div class='c' style='left:758px;width:117px;background:#fff5d4;color:#18187e'><div style='position:absolute;right:2px;top:0;text-align:right'><span style="display:inline-block;white-space:pre;font-size:12px;transform:scaleX(0.8947);transform-origin:right center;">1.00</span></div></div><div class='c' style='left:876px;width:130px;background:#fff5d4;color:#18187e'><div style='position:absolute;right:2px;top:0;text-align:right'><span style="display:inline-block;white-space:pre;font-size:12px;transform:scaleX(0.9047);transform-origin:right center;">826.00 TL</span></div></div><div class='c' style='left:1007px;width:120px;background:#fff5d4;color:#18187e'><div style='position:absolute;right:2px;top:0;text-align:right'><span style="display:inline-block;white-space:pre;font-size:12px;transform:scaleX(0.8969);transform-origin:right center;">0.233679</span></div></div></div>
<div class='r' style='top:485px'><div class='c' style='left:5px;width:123px;background:#eaf6f6;color:#18187e'><div style='position:absolute;left:2px;top:0'><span style="display:inline-block;white-space:pre;font-size:12px;transform:scaleX(0.8965);transform-origin:left center;">260.806</span></div></div><div class='c' style='left:129px;width:545px;background:#eaf6f6;color:#18187e'><div style='position:absolute;left:2px;top:0'><span style="display:inline-block;white-space:pre;font-size:12px;transform:scaleX(0.9768);transform-origin:left center;">4000 m3/h tavan tipi ısı geri kazanımlı havalandırma cihazları</span></div></div><div class='c' style='left:675px;width:82px;background:#eaf6f6;color:#18187e'><div style='position:absolute;left:0;right:0;top:0;text-align:center'><span style="display:inline-block;white-space:pre;font-size:12px;transform:scaleX(0.9300);transform-origin:center center;">AD</span></div></div><div class='c' style='left:758px;width:117px;background:#eaf6f6;color:#18187e'><div style='position:absolute;right:2px;top:0;text-align:right'><span style="display:inline-block;white-space:pre;font-size:12px;transform:scaleX(0.8947);transform-origin:right center;">1.00</span></div></div><div class='c' style='left:876px;width:130px;background:#eaf6f6;color:#18187e'><div style='position:absolute;right:2px;top:0;text-align:right'><span style="display:inline-block;white-space:pre;font-size:12px;transform:scaleX(0.9022);transform-origin:right center;">9,270.00 TL</span></div></div><div class='c' style='left:1007px;width:120px;background:#eaf6f6;color:#18187e'><div style='position:absolute;right:2px;top:0;text-align:right'><span style="display:inline-block;white-space:pre;font-size:12px;transform:scaleX(0.8969);transform-origin:right center;">2.622518</span></div></div></div>
<div class='r' style='top:505px'><div class='c' style='left:5px;width:123px;background:#fff5d4;color:#18187e'><div style='position:absolute;left:2px;top:0'><span style="display:inline-block;white-space:pre;font-size:12px;transform:scaleX(0.8965);transform-origin:left center;">261.151</span></div></div><div class='c' style='left:129px;width:545px;background:#fff5d4;color:#18187e'><div style='position:absolute;left:2px;top:0'><span style="display:inline-block;white-space:pre;font-size:12px;transform:scaleX(0.9729);transform-origin:left center;">En geniş kenarı 600 mm.ye kadar olanlarda 0,60 mm. galvanizli saçtan dikdörtgen hava kanalı yapılması</span></div></div><div class='c' style='left:675px;width:82px;background:#fff5d4;color:#18187e'><div style='position:absolute;left:0;right:0;top:0;text-align:center'><span style="display:inline-block;white-space:pre;font-size:12px;transform:scaleX(0.9300);transform-origin:center center;">M2</span></div></div><div class='c' style='left:758px;width:117px;background:#fff5d4;color:#18187e'><div style='position:absolute;right:2px;top:0;text-align:right'><span style="display:inline-block;white-space:pre;font-size:12px;transform:scaleX(0.8957);transform-origin:right center;">80.00</span></div></div><div class='c' style='left:876px;width:130px;background:#fff5d4;color:#18187e'><div style='position:absolute;right:2px;top:0;text-align:right'><span style="display:inline-block;white-space:pre;font-size:12px;transform:scaleX(0.9022);transform-origin:right center;">6,480.00 TL</span></div></div><div class='c' style='left:1007px;width:120px;background:#fff5d4;color:#18187e'><div style='position:absolute;right:2px;top:0;text-align:right'><span style="display:inline-block;white-space:pre;font-size:12px;transform:scaleX(0.8969);transform-origin:right center;">1.833216</span></div></div></div>
<div class='r' style='top:525px'><div class='c' style='left:5px;width:123px;background:#eaf6f6;color:#18187e'><div style='position:absolute;left:2px;top:0'><span style="display:inline-block;white-space:pre;font-size:12px;transform:scaleX(0.8965);transform-origin:left center;">267.201</span></div></div><div class='c' style='left:129px;width:545px;background:#eaf6f6;color:#18187e'><div style='position:absolute;left:2px;top:0'><span style="display:inline-block;white-space:pre;font-size:12px;transform:scaleX(0.9718);transform-origin:left center;">Toplayıcı menfez tek sıra kanatlı 100-500 cm2</span></div></div><div class='c' style='left:675px;width:82px;background:#eaf6f6;color:#18187e'><div style='position:absolute;left:0;right:0;top:0;text-align:center'><span style="display:inline-block;white-space:pre;font-size:12px;transform:scaleX(0.9300);transform-origin:center center;">AD</span></div></div><div class='c' style='left:758px;width:117px;background:#eaf6f6;color:#18187e'><div style='position:absolute;right:2px;top:0;text-align:right'><span style="display:inline-block;white-space:pre;font-size:12px;transform:scaleX(0.8957);transform-origin:right center;">20.00</span></div></div><div class='c' style='left:876px;width:130px;background:#eaf6f6;color:#18187e'><div style='position:absolute;right:2px;top:0;text-align:right'><span style="display:inline-block;white-space:pre;font-size:12px;transform:scaleX(0.9047);transform-origin:right center;">450.00 TL</span></div></div><div class='c' style='left:1007px;width:120px;background:#eaf6f6;color:#18187e'><div style='position:absolute;right:2px;top:0;text-align:right'><span style="display:inline-block;white-space:pre;font-size:12px;transform:scaleX(0.8969);transform-origin:right center;">0.127307</span></div></div></div>
<div class='r' style='top:545px'><div class='c' style='left:5px;width:123px;background:#fff5d4;color:#18187e'><div style='position:absolute;left:2px;top:0'><span style="display:inline-block;white-space:pre;font-size:12px;transform:scaleX(0.8965);transform-origin:left center;">701.201</span></div></div><div class='c' style='left:129px;width:545px;background:#fff5d4;color:#18187e'><div style='position:absolute;left:2px;top:0'><span style="display:inline-block;white-space:pre;font-size:12px;transform:scaleX(0.9627);transform-origin:left center;">Önden kapaklı saç pano (ts en 61439-1/2 )</span></div></div><div class='c' style='left:675px;width:82px;background:#fff5d4;color:#18187e'><div style='position:absolute;left:0;right:0;top:0;text-align:center'><span style="display:inline-block;white-space:pre;font-size:12px;transform:scaleX(0.9300);transform-origin:center center;">AD</span></div></div><div class='c' style='left:758px;width:117px;background:#fff5d4;color:#18187e'><div style='position:absolute;right:2px;top:0;text-align:right'><span style="display:inline-block;white-space:pre;font-size:12px;transform:scaleX(0.8947);transform-origin:right center;">3.00</span></div></div><div class='c' style='left:876px;width:130px;background:#fff5d4;color:#18187e'><div style='position:absolute;right:2px;top:0;text-align:right'><span style="display:inline-block;white-space:pre;font-size:12px;transform:scaleX(0.9022);transform-origin:right center;">3,270.00 TL</span></div></div><div class='c' style='left:1007px;width:120px;background:#fff5d4;color:#18187e'><div style='position:absolute;right:2px;top:0;text-align:right'><span style="display:inline-block;white-space:pre;font-size:12px;transform:scaleX(0.8969);transform-origin:right center;">0.925095</span></div></div></div>
<div class='r' style='top:565px'><div class='c' style='left:5px;width:123px;background:#eaf6f6;color:#18187e'><div style='position:absolute;left:2px;top:0'><span style="display:inline-block;white-space:pre;font-size:12px;transform:scaleX(0.8965);transform-origin:left center;">705.102</span></div></div><div class='c' style='left:129px;width:545px;background:#eaf6f6;color:#18187e'><div style='position:absolute;left:2px;top:0'><span style="display:inline-block;white-space:pre;font-size:12px;transform:scaleX(0.9689);transform-origin:left center;">Gömme tip sac tablo 0.10-0.20 m2. (ts en 61439-1/2 )</span></div></div><div class='c' style='left:675px;width:82px;background:#eaf6f6;color:#18187e'><div style='position:absolute;left:0;right:0;top:0;text-align:center'><span style="display:inline-block;white-space:pre;font-size:12px;transform:scaleX(0.9300);transform-origin:center center;">AD</span></div></div><div class='c' style='left:758px;width:117px;background:#eaf6f6;color:#18187e'><div style='position:absolute;right:2px;top:0;text-align:right'><span style="display:inline-block;white-space:pre;font-size:12px;transform:scaleX(0.8947);transform-origin:right center;">1.00</span></div></div><div class='c' style='left:876px;width:130px;background:#eaf6f6;color:#18187e'><div style='position:absolute;right:2px;top:0;text-align:right'><span style="display:inline-block;white-space:pre;font-size:12px;transform:scaleX(0.9055);transform-origin:right center;">74.00 TL</span></div></div><div class='c' style='left:1007px;width:120px;background:#eaf6f6;color:#18187e'><div style='position:absolute;right:2px;top:0;text-align:right'><span style="display:inline-block;white-space:pre;font-size:12px;transform:scaleX(0.8969);transform-origin:right center;">0.020935</span></div></div></div>
<div class='r' style='top:585px'><div class='c' style='left:5px;width:123px;background:#fff5d4;color:#18187e'><div style='position:absolute;left:2px;top:0'><span style="display:inline-block;white-space:pre;font-size:12px;transform:scaleX(0.8965);transform-origin:left center;">715.307</span></div></div><div class='c' style='left:129px;width:545px;background:#fff5d4;color:#18187e'><div style='position:absolute;left:2px;top:0'><span style="display:inline-block;white-space:pre;font-size:12px;transform:scaleX(0.9783);transform-origin:left center;">Termik,mağnetik koruyuculu şalter 3*40 a.(tablo arkası ( ts en 60947-2)</span></div></div><div class='c' style='left:675px;width:82px;background:#fff5d4;color:#18187e'><div style='position:absolute;left:0;right:0;top:0;text-align:center'><span style="display:inline-block;white-space:pre;font-size:12px;transform:scaleX(0.9300);transform-origin:center center;">AD</span></div></div><div class='c' style='left:758px;width:117px;background:#fff5d4;color:#18187e'><div style='position:absolute;right:2px;top:0;text-align:right'><span style="display:inline-block;white-space:pre;font-size:12px;transform:scaleX(0.8947);transform-origin:right center;">1.00</span></div></div><div class='c' style='left:876px;width:130px;background:#fff5d4;color:#18187e'><div style='position:absolute;right:2px;top:0;text-align:right'><span style="display:inline-block;white-space:pre;font-size:12px;transform:scaleX(0.9047);transform-origin:right center;">149.00 TL</span></div></div><div class='c' style='left:1007px;width:120px;background:#fff5d4;color:#18187e'><div style='position:absolute;right:2px;top:0;text-align:right'><span style="display:inline-block;white-space:pre;font-size:12px;transform:scaleX(0.8969);transform-origin:right center;">0.042153</span></div></div></div>
<div class='r' style='top:605px'><div class='c' style='left:5px;width:123px;background:#eaf6f6;color:#18187e'><div style='position:absolute;left:2px;top:0'><span style="display:inline-block;white-space:pre;font-size:12px;transform:scaleX(0.8965);transform-origin:left center;">782.100</span></div></div><div class='c' style='left:129px;width:545px;background:#eaf6f6;color:#18187e'><div style='position:absolute;left:2px;top:0'><span style="display:inline-block;white-space:pre;font-size:12px;transform:scaleX(0.9754);transform-origin:left center;">Kablo tava sistemleri</span></div></div><div class='c' style='left:675px;width:82px;background:#eaf6f6;color:#18187e'><div style='position:absolute;left:0;right:0;top:0;text-align:center'><span style="display:inline-block;white-space:pre;font-size:12px;transform:scaleX(0.9300);transform-origin:center center;">KG</span></div></div><div class='c' style='left:758px;width:117px;background:#eaf6f6;color:#18187e'><div style='position:absolute;right:2px;top:0;text-align:right'><span style="display:inline-block;white-space:pre;font-size:12px;transform:scaleX(0.8965);transform-origin:right center;">100.000</span></div></div><div class='c' style='left:876px;width:130px;background:#eaf6f6;color:#18187e'><div style='position:absolute;right:2px;top:0;text-align:right'><span style="display:inline-block;white-space:pre;font-size:12px;transform:scaleX(0.9022);transform-origin:right center;">1,090.00 TL</span></div></div><div class='c' style='left:1007px;width:120px;background:#eaf6f6;color:#18187e'><div style='position:absolute;right:2px;top:0;text-align:right'><span style="display:inline-block;white-space:pre;font-size:12px;transform:scaleX(0.8969);transform-origin:right center;">0.308365</span></div></div></div>
<div class='r' style='top:625px'><div class='c' style='left:5px;width:123px;background:#fff5d4;color:#18187e'><div style='position:absolute;left:2px;top:0'><span style="display:inline-block;white-space:pre;font-size:12px;transform:scaleX(0.8965);transform-origin:left center;">818.203</span></div></div><div class='c' style='left:129px;width:545px;background:#fff5d4;color:#18187e'><div style='position:absolute;left:2px;top:0'><span style="display:inline-block;white-space:pre;font-size:12px;transform:scaleX(0.9717);transform-origin:left center;">Bina harici ana hat tesisatı 0.5 mm. 10 çift.</span></div></div><div class='c' style='left:675px;width:82px;background:#fff5d4;color:#18187e'><div style='position:absolute;left:0;right:0;top:0;text-align:center'><span style="display:inline-block;white-space:pre;font-size:12px;transform:scaleX(0.9300);transform-origin:center center;">MT</span></div></div><div class='c' style='left:758px;width:117px;background:#fff5d4;color:#18187e'><div style='position:absolute;right:2px;top:0;text-align:right'><span style="display:inline-block;white-space:pre;font-size:12px;transform:scaleX(0.8957);transform-origin:right center;">60.00</span></div></div><div class='c' style='left:876px;width:130px;background:#fff5d4;color:#18187e'><div style='position:absolute;right:2px;top:0;text-align:right'><span style="display:inline-block;white-space:pre;font-size:12px;transform:scaleX(0.9047);transform-origin:right center;">255.00 TL</span></div></div><div class='c' style='left:1007px;width:120px;background:#fff5d4;color:#18187e'><div style='position:absolute;right:2px;top:0;text-align:right'><span style="display:inline-block;white-space:pre;font-size:12px;transform:scaleX(0.8969);transform-origin:right center;">0.072140</span></div></div></div>
<div class='r' style='top:645px'><div class='c' style='left:5px;width:123px;background:#eaf6f6;color:#18187e'><div style='position:absolute;left:2px;top:0'><span style="display:inline-block;white-space:pre;font-size:12px;transform:scaleX(0.8965);transform-origin:left center;">819.201</span></div></div><div class='c' style='left:129px;width:545px;background:#eaf6f6;color:#18187e'><div style='position:absolute;left:2px;top:0'><span style="display:inline-block;white-space:pre;font-size:12px;transform:scaleX(0.9973);transform-origin:left center;">Yanmaz plastik telefon dağıtım kutusu 20 çift</span></div></div><div class='c' style='left:675px;width:82px;background:#eaf6f6;color:#18187e'><div style='position:absolute;left:0;right:0;top:0;text-align:center'><span style="display:inline-block;white-space:pre;font-size:12px;transform:scaleX(0.9300);transform-origin:center center;">AD</span></div></div><div class='c' style='left:758px;width:117px;background:#eaf6f6;color:#18187e'><div style='position:absolute;right:2px;top:0;text-align:right'><span style="display:inline-block;white-space:pre;font-size:12px;transform:scaleX(0.8947);transform-origin:right center;">1.00</span></div></div><div class='c' style='left:876px;width:130px;background:#eaf6f6;color:#18187e'><div style='position:absolute;right:2px;top:0;text-align:right'><span style="display:inline-block;white-space:pre;font-size:12px;transform:scaleX(0.9055);transform-origin:right center;">61.00 TL</span></div></div><div class='c' style='left:1007px;width:120px;background:#eaf6f6;color:#18187e'><div style='position:absolute;right:2px;top:0;text-align:right'><span style="display:inline-block;white-space:pre;font-size:12px;transform:scaleX(0.8969);transform-origin:right center;">0.017257</span></div></div></div>
<div class='r' style='top:665px'><div class='c' style='left:5px;width:123px;background:#fff5d4;color:#18187e'><div style='position:absolute;left:2px;top:0'><span style="display:inline-block;white-space:pre;font-size:12px;transform:scaleX(0.8965);transform-origin:left center;">833.555</span></div></div><div class='c' style='left:129px;width:545px;background:#fff5d4;color:#18187e'><div style='position:absolute;left:2px;top:0'><span style="display:inline-block;white-space:pre;font-size:12px;transform:scaleX(1.0034);transform-origin:left center;">Analog adresli yangın ihbar butonu</span></div></div><div class='c' style='left:675px;width:82px;background:#fff5d4;color:#18187e'><div style='position:absolute;left:0;right:0;top:0;text-align:center'><span style="display:inline-block;white-space:pre;font-size:12px;transform:scaleX(0.9300);transform-origin:center center;">AD</span></div></div><div class='c' style='left:758px;width:117px;background:#fff5d4;color:#18187e'><div style='position:absolute;right:2px;top:0;text-align:right'><span style="display:inline-block;white-space:pre;font-size:12px;transform:scaleX(0.8957);transform-origin:right center;">12.00</span></div></div><div class='c' style='left:876px;width:130px;background:#fff5d4;color:#18187e'><div style='position:absolute;right:2px;top:0;text-align:right'><span style="display:inline-block;white-space:pre;font-size:12px;transform:scaleX(0.9022);transform-origin:right center;">1,560.00 TL</span></div></div><div class='c' style='left:1007px;width:120px;background:#fff5d4;color:#18187e'><div style='position:absolute;right:2px;top:0;text-align:right'><span style="display:inline-block;white-space:pre;font-size:12px;transform:scaleX(0.8969);transform-origin:right center;">0.441330</span></div></div></div>
<div class='r' style='top:685px;height:3px;border:0'><div class='c' style='left:5px;width:123px;background:#eaf6f6;height:3px'></div><div class='c' style='left:129px;width:545px;background:#eaf6f6;height:3px'></div><div class='c' style='left:675px;width:82px;background:#eaf6f6;height:3px'></div><div class='c' style='left:758px;width:117px;background:#eaf6f6;height:3px'></div><div class='c' style='left:876px;width:130px;background:#eaf6f6;height:3px'></div><div class='c' style='left:1007px;width:120px;background:#eaf6f6;height:3px'></div></div>
<div id="gbot"></div>
<!-- scrollbar -->
<div id="sb"></div>
<div class="sbb" style="top:130px"><svg width="17" height="17" style="position:absolute;left:-1px;top:-1px"><path d="M4.8 10.3 L8.5 6.6 L12.2 10.3" stroke="#fff" stroke-width="2" fill="none"/></svg></div>
<div id="thumb"></div><div id="thumbShade"></div>
<svg class="abs" style="left:1133px;top:323px" width="8" height="7"><g fill="#c8def6"><rect x="0" y="0" width="6" height="1"/><rect x="0" y="2" width="6" height="1"/><rect x="0" y="4" width="6" height="1"/></g><g fill="#4a66b8"><rect x="1" y="1" width="6" height="1"/><rect x="1" y="3" width="6" height="1"/><rect x="1" y="5" width="6" height="1"/></g></svg>
<div class="sbb" style="top:671px"><svg width="17" height="17" style="position:absolute;left:-1px;top:-1px"><path d="M4.8 6.8 L8.5 10.5 L12.2 6.8" stroke="#fff" stroke-width="2" fill="none"/></svg></div>

<!-- footer -->
<div class="abs" style="left:5px;top:690px;width:1140px;height:19px;background:linear-gradient(180deg,#b0ccf0 0,#b0ccf0 18px,#dbe7fa 18px)"></div>
<div class="pn f" style="left:6px;top:690px;width:252px;height:18px"><div></div></div>
<div class="pn f" style="left:259px;top:690px;width:886px;height:18px"><div></div></div>
<!-- status bar -->
<div class="abs" style="left:4px;top:710px;width:1142px;height:2px;background:linear-gradient(180deg,#86ade3 0,#86ade3 1px,#fff 1px)"></div>
<div class="abs" style="left:4px;top:712px;width:1142px;height:23px;background:linear-gradient(180deg,#9cc0ec 0%,#b0cff1 100%)"></div>
<div class="pn s1" style="left:4px;top:712px;width:170px;height:23px"><div></div></div>
<div class="pn s2" style="left:175px;top:712px;width:464px;height:23px"><div></div></div>
<div class="pn s1" style="left:640px;top:712px;width:302px;height:23px"><div></div></div>
<div class="pn s1" style="left:943px;top:712px;width:188px;height:23px"><div></div></div>
<!-- size grip -->
<svg class="abs" style="left:1132px;top:722px" width="14" height="14"><g fill="#dbe8f9"><rect x="10" y="2" width="2" height="2"/><rect x="6" y="6" width="2" height="2"/><rect x="10" y="6" width="2" height="2"/><rect x="2" y="10" width="2" height="2"/><rect x="6" y="10" width="2" height="2"/><rect x="10" y="10" width="2" height="2"/></g><g fill="#4c7fd2"><rect x="9" y="1" width="2" height="2"/><rect x="5" y="5" width="2" height="2"/><rect x="9" y="5" width="2" height="2"/><rect x="1" y="9" width="2" height="2"/><rect x="5" y="9" width="2" height="2"/><rect x="9" y="9" width="2" height="2"/></g></svg>
</body></html>
